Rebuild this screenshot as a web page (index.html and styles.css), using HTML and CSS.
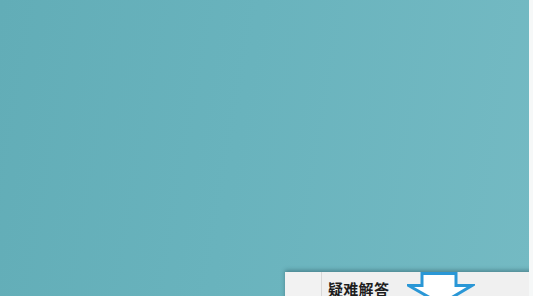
FILE: index.html
```html
<!DOCTYPE html>
<html lang="zh">
<head>
<meta charset="utf-8">
<link rel="stylesheet" href="styles.css">
</head>
<body>
<div class="frame">
  <div class="desktop">
    <div class="menu">
      <div class="icon-col"></div>
      <div class="items">
        <div class="item">疑难解答</div>
      </div>
    </div>
    <svg class="arrow" width="68" height="32" viewBox="0 0 68 32">
      <path d="M15 1.5 H49 V13.5 H65 L34 32 L1.5 13.5 H15 Z" fill="#fff" stroke="#2a97d6" stroke-width="3" stroke-linejoin="miter"/>
    </svg>
  </div>
  <div class="edge"></div>
</div>
</body>
</html>
```
FILE: styles.css
```css
html, body {
  margin: 0;
  padding: 0;
  width: 533px;
  height: 296px;
  overflow: hidden;
  background: #f4f6f6;
}
.frame {
  display: flex;
  width: 533px;
  height: 296px;
}
.desktop {
  position: relative;
  flex: 0 0 529px;
  height: 296px;
  background: linear-gradient(100deg, #62adb7 0%, #69b3bd 45%, #74bac3 100%);
  overflow: hidden;
}
.edge {
  flex: 1;
  background: #f6f8f8;
}
.menu {
  position: absolute;
  left: 285px;
  top: 272px;
  width: 250px;
  height: 40px;
  display: flex;
  background: #f0f0f0;
  box-shadow: 0 -2px 4px rgba(40, 80, 90, 0.45);
}
.icon-col {
  width: 36px;
  border-right: 1px solid #d8d8d8;
  background: #f2f2f2;
}
.items {
  flex: 1;
  padding-left: 6px;
}
.item {
  font-family: "Noto Sans CJK SC", "Noto Sans", sans-serif;
  font-weight: 700;
  font-size: 15px;
  line-height: 20px;
  color: #1e1e1e;
  padding-top: 7px;
  letter-spacing: 0.3px;
}
.arrow {
  position: absolute;
  left: 407px;
  top: 272px;
}
```
